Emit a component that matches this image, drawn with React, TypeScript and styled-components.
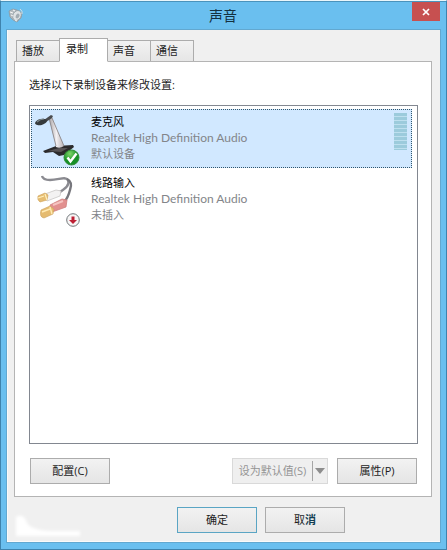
import React, { useState } from "react";
import styled, { createGlobalStyle, css } from "styled-components";

const GlobalStyle = createGlobalStyle`
  *, *::before, *::after { box-sizing: border-box; }
  body {
    margin: 0;
    background: #6abfef;
    color: #1c1c1c;
    font: 11px/16px "Open Sans", "Noto Sans CJK SC", sans-serif;
  }
  button { font: inherit; color: inherit; }
`;

const Dialog = styled.main`
  display: flex;
  flex-direction: column;
  min-height: 100vh;
  padding: 0 6px 7px;
  border: 1px solid #3f83ad;
  border-top-color: #eaf6fb;
  background: #6abfef;
`;

const TitleBar = styled.header`
  display: grid;
  grid-template-columns: 42px 1fr 44px;
  height: 29px;
  margin: 0 -6px;
  padding: 0 6px 0 7px;
  border-top: 1px solid #4a93bc;
`;

const TitleIcon = styled.svg`
  width: 16px;
  height: 16px;
  margin-top: 5px;
`;

const Title = styled.h1`
  margin: 0;
  font-size: 14px;
  font-weight: 400;
  line-height: 27px;
  text-align: center;
  color: #14303f;
`;

const CloseButton = styled.button`
  display: grid;
  place-items: center;
  justify-self: end;
  width: 28px;
  height: 19px;
  padding: 0;
  border: 0;
  background: #c75050;
`;

const Client = styled.div`
  display: flex;
  flex: 1;
  flex-direction: column;
  padding: 8px 8px 9px 7px;
  background: #f0f0f0;
  box-shadow: inset 1px -1px #fafafa, 0 0 0 1px #62a8d0;
`;

const TabList = styled.div`
  display: flex;
  align-items: flex-end;
  height: 24px;
  padding-left: 2px;
  margin-bottom: -1px;
`;

const Tab = styled.button<{ $active: boolean }>`
  width: 44px;
  height: 22px;
  margin-right: -1px;
  padding: 0 0 0 5px;
  border: 1px solid #acacac;
  background: linear-gradient(#f2f2f2, #e6e6e6);
  text-align: left;
  ${(p) =>
    p.$active &&
    css`
      z-index: 1;
      width: 49px;
      height: 24px;
      padding: 0 0 2px 6px;
      border-bottom-color: #fff;
      background: #fff;
    `}
`;

const Panel = styled.section`
  display: flex;
  flex: 1;
  flex-direction: column;
  padding: 15px 13px 12px 14px;
  border: 1px solid #b4b4b4;
  background: #fff;
`;

const Prompt = styled.p`
  margin: 0 0 12px;
`;

const DeviceList = styled.ul`
  flex: 1;
  margin: 0;
  padding: 3px 5px 3px 1px;
  border: 1px solid #828790;
  list-style: none;
`;

const DeviceRow = styled.li<{ $selected: boolean }>`
  display: flex;
  height: 59px;
  margin-bottom: 2px;
  padding: 3px 4px 3px 3px;
  border: 1px ${(p) => (p.$selected ? "dotted #30566d" : "solid transparent")};
  background: ${(p) => (p.$selected ? "#d1e8ff" : "transparent")};
`;

const DeviceIcon = styled.svg`
  flex: none;
  width: 48px;
  height: 54px;
`;

const DeviceText = styled.div`
  flex: 1;
  padding: 1px 0 0 8px;
`;

const DeviceName = styled.div`
  color: #000;
`;

const DeviceDetail = styled.div`
  color: #838589;
`;

const DriverName = styled(DeviceDetail)`
  font-family: Lato, sans-serif;
  font-size: 12px;
`;

const Meter = styled.div`
  width: 13px;
  height: 37px;
  background: repeating-linear-gradient(#9ccbdc 0 3px, #bfe0ef 3px 4px);
`;

const Actions = styled.div`
  display: flex;
  gap: 9px;
  margin: 14px 1px 0;
`;

const Spacer = styled.span`
  flex: 1;
`;

const PushButton = styled.button<{ $primary?: boolean }>`
  width: 80px;
  height: 26px;
  padding: 0;
  border: 1px solid ${(p) => (p.$primary ? "#5aa5c4" : "#acacac")};
  background: linear-gradient(#f2f2f2, #e5e5e5);
`;

const SplitButton = styled.div`
  display: flex;
  align-items: center;
  width: 96px;
  height: 26px;
  border: 1px solid #d9d9d9;
  background: #efefef;
`;

const SplitMain = styled.button`
  flex: 1;
  padding: 0;
  border: 0;
  background: none;
  color: #949494;
  white-space: nowrap;
`;

const SplitArrow = styled.button`
  display: grid;
  place-items: center;
  width: 15px;
  height: 20px;
  padding: 0;
  border: 0;
  border-left: 1px solid #a5a5a5;
  background: none;
`;

const Footer = styled.footer`
  display: flex;
  align-items: flex-start;
  gap: 8px;
  height: 35px;
  margin: 10px 87px -9px 0;
`;

const Smudge = styled.svg`
  width: 74px;
  height: 34px;
`;

const DeepText = styled.span`
  font-weight: 700;
  color: #123e52;
`;

function SpeakerIcon() {
  return (
    <TitleIcon viewBox="0 0 16 16" aria-hidden="true">
      <path d="M1 4l4-2 4 1 5 3-1 5-4 4-4-2-3-3z" fill="#b4bbbf" stroke="#8b979d" strokeWidth=".7" />
      <ellipse cx="9" cy="8.5" rx="4" ry="5.2" transform="rotate(28 9 8.5)" fill="#dfe3e5" stroke="#8e9aa0" strokeWidth=".7" />
      <ellipse cx="9.6" cy="9" rx="1.8" ry="2.6" transform="rotate(28 9.6 9)" fill="#a3adb3" />
      <path d="M2 5l3 1M3 8l2 1M5 3l2 1M7 13l2 1" stroke="#f6f7f7" />
      <path d="M12 2q3 2 2 5" fill="none" stroke="#d3dde2" />
    </TitleIcon>
  );
}

function MicrophoneIcon() {
  return (
    <DeviceIcon viewBox="0 0 48 54" aria-hidden="true">
      <defs>
        <linearGradient id="stem" x1="0" x2="1">
          <stop offset="0" stopColor="#a9a4a6" />
          <stop offset=".5" stopColor="#f3f0f2" />
          <stop offset="1" stopColor="#b5afb2" />
        </linearGradient>
        <radialGradient id="ok" cx=".4" cy=".25">
          <stop offset="0" stopColor="#7fd66a" />
          <stop offset="1" stopColor="#169027" />
        </radialGradient>
      </defs>
      <path d="M8 38l13-5 17-1 1 2-10 8-5 1-6-4-8 1z" fill="#2b2a2c" />
      <path d="M13 38l11-3 9 0-7 4z" fill="#575355" />
      <path d="M14 5l3-1 12 29q-4 3-8 1z" fill="url(#stem)" />
      <path d="M14 5l7 28M17 5l12 28" fill="none" stroke="#807b7e" strokeWidth=".8" />
      <path d="M9 7l7-5 2 1-1 2-6 4" fill="#4a4c4f" />
      <ellipse cx="6" cy="9" rx="6" ry="3" transform="rotate(-14 6 9)" fill="#363a3c" />
      <path d="M2 9q3-3 7-3" fill="none" stroke="#7b878c" strokeWidth="1.2" />
      <circle cx="36.5" cy="44.5" r="7.5" fill="url(#ok)" stroke="#318b38" />
      <path d="M32.5 44.5l3 4 6-8" fill="none" stroke="#fff" strokeWidth="2.4" />
    </DeviceIcon>
  );
}

function LineInIcon() {
  return (
    <DeviceIcon viewBox="0 0 48 54" aria-hidden="true">
      <path d="M7 2q1 4 8 4c9 0 15-4 18 0q3 6-10 13" fill="none" stroke="#8b8b91" strokeWidth="2.4" />
      <path d="M32 5q6 3 3 11-2 8-6 12" fill="none" stroke="#77777d" strokeWidth="2.4" />
      <path d="M10 20l11-4 5 1-1 5-13 5z" fill="#f3f2f2" stroke="#c9c6c5" strokeWidth=".8" />
      <path d="M3 22l7-3 3 2-1 5-7 2q-3-2-2-6z" fill="#e6bd72" stroke="#cda057" strokeWidth=".6" />
      <path d="M3 24l6-2M10 20l2 6" stroke="#fff0bd" strokeWidth="1.2" />
      <path d="M15 31l12-6 5 1-1 7-14 5z" fill="#e2908f" stroke="#cf7f7e" strokeWidth=".8" />
      <path d="M18 31l10-4" stroke="#f5c4c1" strokeWidth="2" />
      <path d="M6 36l9-4 4 3-1 5-9 4q-5-1-3-8z" fill="#e5bb70" stroke="#cba35f" strokeWidth=".6" />
      <path d="M7 38l8-3M15 33l2 7" stroke="#ffebb4" strokeWidth="1.4" />
      <circle cx="38" cy="46" r="6.3" fill="#f8f6f6" stroke="#70777a" />
      <path d="M36.5 42.5h3v3.5h2.5l-4 4-4-4h2.5z" fill="#bd2034" />
    </DeviceIcon>
  );
}

const tabs = ["播放", "录制", "声音", "通信"];

const devices = [
  { name: "麦克风", status: "默认设备", icon: <MicrophoneIcon />, meter: true },
  { name: "线路输入", status: "未插入", icon: <LineInIcon />, meter: false },
];

export default function App() {
  const [tab, setTab] = useState(1);
  const [selected, setSelected] = useState(0);

  return (
    <>
      <GlobalStyle />
      <Dialog>
        <TitleBar>
          <SpeakerIcon />
          <Title>声音</Title>
          <CloseButton aria-label="关闭">
            <svg width="8" height="8" viewBox="0 0 8 8" aria-hidden="true">
              <path d="M1 1l6 6M7 1L1 7" stroke="#fff" strokeWidth="1.7" />
            </svg>
          </CloseButton>
        </TitleBar>
        <Client>
          <TabList role="tablist">
            {tabs.map((label, i) => (
              <Tab key={label} role="tab" aria-selected={tab === i} $active={tab === i} onClick={() => setTab(i)}>
                {label}
              </Tab>
            ))}
          </TabList>
          <Panel role="tabpanel">
            <Prompt id="prompt">选择以下录制设备来修改设置:</Prompt>
            <DeviceList role="listbox" aria-labelledby="prompt">
              {devices.map((d, i) => (
                <DeviceRow
                  key={d.name}
                  role="option"
                  tabIndex={0}
                  aria-selected={selected === i}
                  $selected={selected === i}
                  onClick={() => setSelected(i)}
                >
                  {d.icon}
                  <DeviceText>
                    <DeviceName>{d.name}</DeviceName>
                    <DriverName>Realtek High Definition Audio</DriverName>
                    <DeviceDetail>{d.status}</DeviceDetail>
                  </DeviceText>
                  {d.meter && <Meter />}
                </DeviceRow>
              ))}
            </DeviceList>
            <Actions>
              <PushButton>配置(C)</PushButton>
              <Spacer />
              <SplitButton>
                <SplitMain disabled>设为默认值(S)</SplitMain>
                <SplitArrow disabled aria-label="更多选项">
                  <svg width="10" height="6" viewBox="0 0 10 6" aria-hidden="true">
                    <path d="M0 0h10L5 6z" fill="#8d8d8d" />
                  </svg>
                </SplitArrow>
              </SplitButton>
              <PushButton>属性(P)</PushButton>
            </Actions>
          </Panel>
          <Footer>
            <Smudge viewBox="0 0 74 34" aria-hidden="true">
              <defs>
                <filter id="soft"><feGaussianBlur stdDeviation="1.5" /></filter>
              </defs>
              <path d="M2 10q8-4 11 6 4 7 24 8h29v5H2z" fill="#fff" filter="url(#soft)" />
            </Smudge>
            <Spacer />
            <PushButton $primary>确定</PushButton>
            <PushButton>
              取<DeepText>消</DeepText>
            </PushButton>
          </Footer>
        </Client>
      </Dialog>
    </>
  );
}
